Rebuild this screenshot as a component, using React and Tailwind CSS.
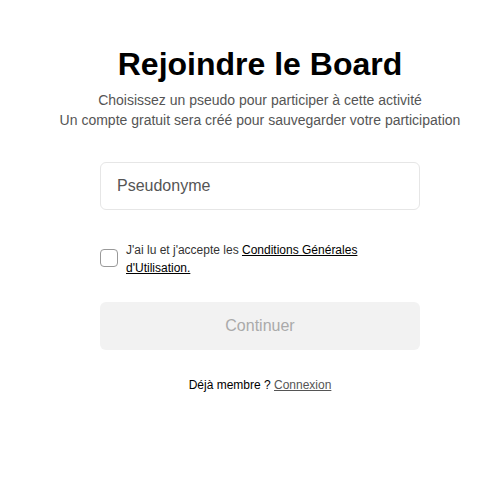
import React, { useState } from 'react';

export default function App() {
    const [pseudo, setPseudo] = useState('');
    const [accepted, setAccepted] = useState(false);
    const canContinue = pseudo.trim().length > 0 && accepted;

    return (
        <div className="min-h-screen bg-white font-['Liberation_Sans',Arial,sans-serif] pl-[27px]">
            <div className="flex flex-col items-center pt-[44px]">
                <h1 className="text-[32px] leading-[40px] font-bold text-black">Rejoindre le Board</h1>
                <p className="mt-[6px] text-sm leading-5 text-[#555] text-center">
                    Choisissez un pseudo pour participer à cette activité
                    <br />
                    Un compte gratuit sera créé pour sauvegarder votre participation
                </p>

                <div className="w-[320px] mt-[32px]">
                    <input
                        type="text"
                        value={pseudo}
                        onChange={(e) => setPseudo(e.target.value)}
                        placeholder="Pseudonyme"
                        className="w-full h-[48px] px-4 rounded-md border border-[#e6e6e6] text-base text-[#333] placeholder:text-[#555] outline-none"
                    />

                    <label className="flex items-start gap-2 mt-[31px] cursor-pointer">
                        <input
                            type="checkbox"
                            checked={accepted}
                            onChange={(e) => setAccepted(e.target.checked)}
                            className="appearance-none mt-[8px] w-[18px] h-[18px] shrink-0 rounded-[4px] border border-[#999] bg-white"
                        />
                        <span className="text-xs leading-[18px] text-[#333] max-w-[240px]">
                            J'ai lu et j'accepte les{' '}
                            <a href="#" className="text-black underline">Conditions Générales d'Utilisation.</a>
                        </span>
                    </label>

                    <button
                        disabled={!canContinue}
                        className="w-full h-[48px] mt-[25px] rounded-md bg-[#f2f2f2] text-base text-[#aaa]"
                    >
                        Continuer
                    </button>

                    <p className="mt-[27px] text-xs text-center text-black">
                        Déjà membre ? <a href="#" className="text-[#555] underline">Connexion</a>
                    </p>
                </div>
            </div>
        </div>
    );
}
